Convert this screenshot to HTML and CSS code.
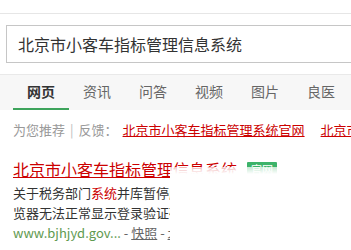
FILE: index.html
```html
<!DOCTYPE html>
<html lang="zh-CN">
<head>
    <meta charset="UTF-8">
    <meta name="viewport" content="width=device-width, initial-scale=1.0">
    <title>北京市小客车指标管理信息系统 - 搜索</title>
    <link rel="stylesheet" href="styles.css">
</head>
<body>

    <div class="topbar"></div>

    <div class="search-row">
        <span class="logo-cut"><span>搜</span></span>
        <div class="search-box">北京市小客车指标管理信息系统</div>
    </div>

    <div class="tabs">
        <span class="tab active">网页</span>
        <span class="tab">资讯</span>
        <span class="tab">问答</span>
        <span class="tab">视频</span>
        <span class="tab">图片</span>
        <span class="tab">良医</span>
    </div>

    <div class="recommend">
        <span class="rec-label">为您推荐</span>
        <span class="sep">|</span>
        <span class="rec-label">反馈：</span>
        <a class="rec-link" href="#">北京市小客车指标管理系统官网</a>
        <a class="rec-link" href="#">北京市小客车指标</a>
    </div>

    <div class="result">
        <div class="result-title">
            <a href="#">北京市小客车指标管理信息系统</a>
            <span class="badge">官网</span>
        </div>
        <p class="snippet">关于税务部门<em>系统</em>并库暂停服务的通知 由于浏</p>
        <p class="snippet">览器无法正常显示登录验证码的问题</p>
        <p class="meta"><span class="url">www.bjhjyd.gov...</span> - <a href="#">快照</a> - <a href="#">北京</a></p>
    </div>

    <!-- 弹出层遮住右下角 -->
    <div class="cover"></div>

</body>
</html>
```

FILE: styles.css
```css
* {
    margin: 0;
    padding: 0;
    box-sizing: border-box;
}

body {
    font-family: "Noto Sans CJK SC", "Noto Sans", sans-serif;
    background-color: #fff;
    color: #333;
    width: 351px;
    height: 250px;
    overflow: hidden;
    position: relative;
}

a {
    color: inherit;
}

.topbar {
    height: 14px;
    border-bottom: 1px solid #e6e6e6;
}

.search-row {
    display: flex;
    align-items: center;
    margin-top: 11px;
}

.logo-cut {
    width: 7px;
    overflow: hidden;
    display: flex;
    justify-content: flex-end;
    font-size: 20px;
    color: #333;
}

.logo-cut span {
    flex: none;
    margin-right: 1px;
}

.search-box {
    flex: none;
    width: 400px;
    height: 38px;
    margin-left: 6px;
    border: 1px solid #c6c6c6;
    padding-left: 11px;
    font-size: 16px;
    line-height: 36px;
    color: #333;
}

.tabs {
    display: flex;
    margin-top: 11px;
    height: 36px;
    padding-left: 13px;
    background-color: #f7f7f7;
    border-top: 1px solid #e9e9e9;
}

.tab {
    width: 56px;
    flex: none;
    text-align: center;
    font-size: 14px;
    line-height: 33px;
    color: #666;
    border-bottom: 2px solid transparent;
}

.tab.active {
    color: #333;
    font-weight: bold;
    border-bottom-color: #3ea45c;
}

.recommend {
    display: flex;
    white-space: nowrap;
    margin-top: 10px;
    padding-left: 13px;
    font-size: 13px;
    line-height: 20px;
    color: #999;
}

.sep {
    margin: 0 5px;
    color: #bbb;
}

.rec-link {
    color: #c00;
    margin-left: 5px;
    margin-right: 11px;
}

.result {
    margin-top: 18px;
    padding-left: 13px;
    white-space: nowrap;
}

.result-title {
    display: flex;
    align-items: center;
    font-size: 16px;
    line-height: 22px;
}

.result-title a {
    color: #c00;
}

.badge {
    margin-left: 10px;
    background-color: #3db36a;
    color: #fff;
    font-size: 11px;
    line-height: 14px;
    padding: 0 4px;
    border-radius: 1px;
}

.snippet {
    font-size: 13px;
    line-height: 20px;
    color: #333;
}

.snippet:first-of-type {
    margin-top: 3px;
}

.snippet em {
    font-style: normal;
    color: #c00;
}

.meta {
    font-size: 13px;
    line-height: 20px;
    color: #666;
}

.url {
    color: #5f9a50;
}

.cover {
    position: absolute;
    left: 170px;
    top: 167px;
    right: 0;
    bottom: 0;
    background: linear-gradient(rgba(255, 255, 255, 0.7), #fff 7px);
}
```
